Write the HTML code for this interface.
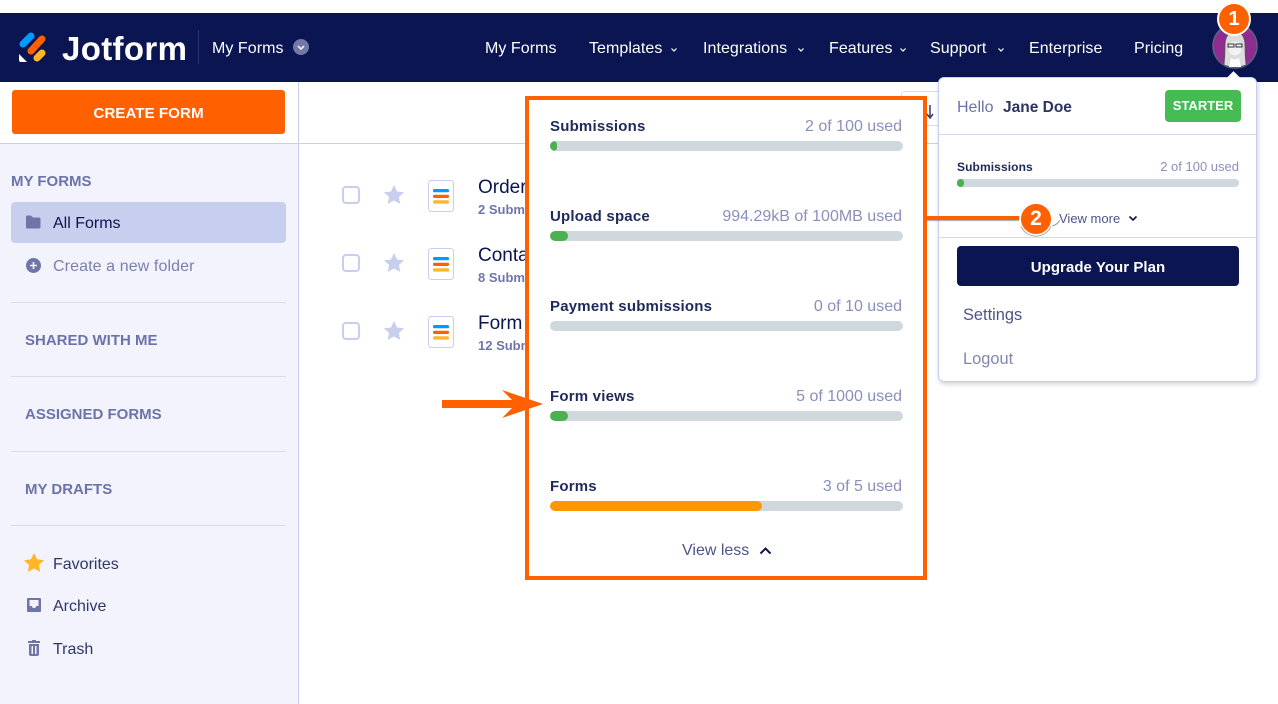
<!DOCTYPE html>
<html><head><meta charset="utf-8"><title>Jotform</title>
<style>
html,body{margin:0;padding:0;background:#fff}
#p{position:relative;width:1278px;height:704px;overflow:hidden;font-family:"Liberation Sans",sans-serif;background:#fff}
#p div,#p span.t{position:absolute}
.t{white-space:nowrap;line-height:20px}
.nav{color:#fff;font-size:16px;top:39px;letter-spacing:.05px}
.side{color:#6c73a8;font-size:15px;font-weight:bold}
.item{color:#2c3345;font-size:16px}
.hr{height:1px;background:#d9dcee}
.bar{height:10px;border-radius:5px;background:#cfd8dc;left:550px;width:353px;overflow:hidden}
.bar i{display:block;height:100%;border-radius:5px;background:#4caf50}
.lab{left:550px;font-size:15px;font-weight:bold;color:#1f2a5c;letter-spacing:.2px}
.use{right:376px;font-size:16px;color:#8a8fbb}
.fname{left:478px;font-size:19px;color:#0a1551}
.fsub{left:478px;font-size:13px;font-weight:bold;color:#6f76a7}
.cb{left:342px;width:14px;height:14px;border:2px solid #c8ceed;border-radius:4px;background:#fff}
</style></head><body><div id="p">
<div style="left:0;top:13px;width:1278px;height:69px;background:#0a1551"></div>
<div style="left:0;top:144px;width:298px;height:560px;background:#f3f3fe"></div>
<div style="left:298px;top:82px;width:1px;height:622px;background:#c8ceed"></div>
<div style="left:0;top:143px;width:938px;height:1px;background:#c8ceed"></div>

<svg style="position:absolute;left:18px;top:31px" width="30" height="33" viewBox="0 0 30 33">
<path d="M5 13 L13 5" stroke="#0099ff" stroke-width="7" stroke-linecap="round"/>
<path d="M13 20 L24 8" stroke="#ff6100" stroke-width="7" stroke-linecap="round"/>
<path d="M19 27 L24 22" stroke="#ffb629" stroke-width="7" stroke-linecap="round"/>
<path d="M1 23 L9 31 H3 Q1 31 1 29Z" fill="#fff"/>
</svg>
<span class="t" style="left:62px;top:32px;font-size:33px;line-height:34px;font-weight:bold;color:#fff;letter-spacing:.35px">Jotform</span>
<div style="left:198px;top:30px;width:1px;height:34px;background:#2b3570"></div>
<span class="t nav" style="left:212px">My Forms</span>
<div style="left:293px;top:39px;width:16px;height:16px;border-radius:50%;background:#7278a8"></div>
<svg style="position:absolute;left:293px;top:39px" width="16" height="16"><path d="M5 7l3 3 3-3" fill="none" stroke="#fff" stroke-width="1.500"/></svg>

<span class="t nav" style="left:485px">My Forms</span>
<span class="t nav" style="left:589px">Templates</span>
<span class="t nav" style="left:703px">Integrations</span>
<span class="t nav" style="left:829px">Features</span>
<span class="t nav" style="left:930px">Support</span>
<span class="t nav" style="left:1029px">Enterprise</span>
<span class="t nav" style="left:1134px">Pricing</span>
<svg style="position:absolute;left:0;top:0" width="1010" height="60" fill="none" stroke="#fff" stroke-width="1.200">
<path d="M671.500 48.500l2.500 2.500 2.500-2.500M798.500 48.500l2.500 2.500 2.500-2.500M900.500 48.500l2.500 2.500 2.500-2.500M998.500 48.500l2.500 2.500 2.500-2.500"/></svg>

<svg style="position:absolute;left:1212px;top:22px" width="46" height="48" viewBox="0 0 46 48">
<circle cx="23" cy="24" r="22" fill="#8e2c91" stroke="#5d6080" stroke-width="1.500"/>
<path d="M12 43 Q13 34 13 24 Q13 10 23 10 Q33 10 33 24 Q33 34 34 43 Q23 47 12 43Z" fill="#dcdcdc" stroke="#555" stroke-width=".8"/>
<path d="M17 22 Q23 17 29 22 V30 Q23 37 17 30Z" fill="#f2f2f2"/>
<rect x="16" y="22" width="6" height="3" fill="none" stroke="#333" stroke-width="1"/>
<rect x="24" y="22" width="6" height="3" fill="none" stroke="#333" stroke-width="1"/>
<path d="M19 36 Q23 39 27 36 L29 45 H17Z" fill="#fff"/>
</svg>
<div style="left:1217px;top:2px;width:30px;height:30px;border:2px solid #fff;border-radius:50%;background:#ff6100;color:#fff;font-size:20px;font-weight:bold;line-height:30px;text-align:center">1</div>

<div style="left:901px;top:91px;width:40px;height:35px;background:#fff;border:1px solid #d9dcee;border-radius:3px;box-sizing:border-box"></div>
<svg style="position:absolute;left:926px;top:104px" width="9" height="16"><path d="M4 1V14M1 10l3 4 3-4" fill="none" stroke="#343c6a" stroke-width="1.500"/></svg>

<div style="left:938px;top:77px;width:319px;height:305px;background:#fff;border:1px solid #c8ceed;border-radius:6px;box-sizing:border-box;box-shadow:1px 2px 5px rgba(10,21,81,.2)"></div>
<div style="left:1229px;top:73px;width:9px;height:9px;background:#fff;transform:rotate(45deg)"></div>
<span class="t" style="left:957px;top:98px;font-size:16px;color:#6c73a8">Hello</span>
<span class="t" style="left:1003px;top:98px;font-size:15.500px;font-weight:bold;color:#2c3360">Jane Doe</span>
<div style="left:1165px;top:90px;width:76px;height:32px;background:#45bb54;border-radius:4px;color:#fff;font-size:13px;font-weight:bold;line-height:32px;text-align:center">STARTER</div>
<div class="hr" style="left:939px;top:134px;width:317px;background:#d4d8ef"></div>
<span class="t" style="left:957px;top:157px;font-size:12px;letter-spacing:.1px;font-weight:bold;color:#1f2a5c">Submissions</span>
<span class="t" style="right:39px;top:157px;font-size:13px;color:#8a8fbb">2 of 100 used</span>
<div style="left:957px;top:179px;width:282px;height:8px;background:#cfd8dc;border-radius:4px"></div>
<div style="left:957px;top:179px;width:7px;height:8px;background:#4caf50;border-radius:4px"></div>
<span class="t" style="left:1059px;top:209px;font-size:13px;color:#4d5488">View more</span>
<svg style="position:absolute;left:1128px;top:215px" width="10" height="8"><path d="M1.500 1.500l3.500 3.500 3.500-3.500" fill="none" stroke="#0a1551" stroke-width="1.600"/></svg>
<div class="hr" style="left:939px;top:237px;width:317px;background:#d4d8ef"></div>
<div style="left:957px;top:246px;width:282px;height:40px;background:#0a1551;border-radius:4px;color:#fff;font-size:15px;font-weight:bold;line-height:43px;text-align:center;letter-spacing:.05px">Upgrade Your Plan</div>
<span class="t" style="left:963px;top:305px;font-size:16.400px;color:#4d5488">Settings</span>
<span class="t" style="left:963px;top:349px;font-size:16.400px;color:#8287b0">Logout</span>

<div style="left:12px;top:90px;width:273px;height:44px;background:#ff6100;border-radius:3px;color:#fff;font-size:15.200px;font-weight:bold;line-height:47px;text-align:center">CREATE FORM</div>

<span class="t side" style="left:11px;top:172px">MY FORMS</span>
<div style="left:11px;top:202px;width:275px;height:41px;background:#c8ceed;border-radius:4px"></div>
<svg style="position:absolute;left:25px;top:215px" width="16" height="14"><path d="M1 1.500Q1 .5 2 .5H6L8 2.500H14Q15.500 2.500 15.500 4V12Q15.500 13.500 14 13.500H2Q1 13.500 1 12Z" fill="#6f76a7"/></svg>
<span class="t item" style="left:53px;top:214px;color:#0a1551">All Forms</span>
<svg style="position:absolute;left:26px;top:258px" width="15" height="15"><circle cx="7.500" cy="7.500" r="7.500" fill="#6f76a7"/><path d="M7.500 4v7M4 7.500h7" stroke="#f3f3fe" stroke-width="1.600"/></svg>
<span class="t item" style="left:53px;top:257px;color:#7a80ad;letter-spacing:.1px">Create a new folder</span>
<div class="hr" style="left:11px;top:302px;width:275px"></div>
<span class="t side" style="left:25px;top:331px">SHARED WITH ME</span>
<div class="hr" style="left:11px;top:376px;width:275px"></div>
<span class="t side" style="left:25px;top:405px">ASSIGNED FORMS</span>
<div class="hr" style="left:11px;top:451px;width:275px"></div>
<span class="t side" style="left:25px;top:480px">MY DRAFTS</span>
<div class="hr" style="left:11px;top:525px;width:275px"></div>

<svg style="position:absolute;left:24px;top:553px" width="20" height="19" viewBox="0 0 20 19"><path d="M10 0l3 6.300 7 .9-5.100 4.800 1.300 6.900L10 15.500 3.800 18.900 5.100 12 0 7.200l7-.9z" fill="#ffb629"/></svg>
<span class="t item" style="left:53px;top:555px;color:#2f3768">Favorites</span>
<svg style="position:absolute;left:27px;top:598px" width="14" height="14"><path d="M1 0H13Q14 0 14 1V13Q14 14 13 14H1Q0 14 0 13V1Q0 0 1 0ZM2.500 2V8H4.500L6 10H8L9.500 8H11.500V2Z" fill="#6f76a7" fill-rule="evenodd"/></svg>
<span class="t item" style="left:53px;top:597px;color:#2f3768">Archive</span>
<svg style="position:absolute;left:28px;top:640px" width="12" height="16"><path d="M4 0H8V1H12V3H0V1H4ZM1 4H11V14Q11 16 9 16H3Q1 16 1 14ZM3.500 6V14H5V6ZM7 6V14H8.500V6Z" fill="#6f76a7" fill-rule="evenodd"/></svg>
<span class="t item" style="left:53px;top:640px;color:#2f3768">Trash</span>

<div class="cb" style="top:186px"></div><div class="cb" style="top:254px"></div><div class="cb" style="top:322px"></div>
<svg style="position:absolute;left:384px;top:185px" width="20" height="160" fill="#c8ceed">
<path d="M10 0l3 6.500 7 .8-5.100 4.700 1.400 7L10 15.500 3.700 19l1.400-7L0 7.300l7-.8z"/>
<path transform="translate(0 68)" d="M10 0l3 6.500 7 .8-5.100 4.700 1.400 7L10 15.500 3.700 19l1.400-7L0 7.300l7-.8z"/>
<path transform="translate(0 136)" d="M10 0l3 6.500 7 .8-5.100 4.700 1.400 7L10 15.500 3.700 19l1.400-7L0 7.300l7-.8z"/>
</svg>
<svg style="position:absolute;left:428px;top:180px" width="26" height="170">
<g><rect x=".5" y=".5" width="25" height="31" rx="3" fill="#fff" stroke="#c8ceed"/><rect x="5" y="9" width="16" height="3.300" rx="1.600" fill="#0099ff"/><rect x="5" y="14.700" width="16" height="3.300" rx="1.600" fill="#ff6100"/><rect x="5" y="20.300" width="16" height="3.300" rx="1.600" fill="#ffb629"/></g>
<g transform="translate(0 68)"><rect x=".5" y=".5" width="25" height="31" rx="3" fill="#fff" stroke="#c8ceed"/><rect x="5" y="9" width="16" height="3.300" rx="1.600" fill="#0099ff"/><rect x="5" y="14.700" width="16" height="3.300" rx="1.600" fill="#ff6100"/><rect x="5" y="20.300" width="16" height="3.300" rx="1.600" fill="#ffb629"/></g>
<g transform="translate(0 136)"><rect x=".5" y=".5" width="25" height="31" rx="3" fill="#fff" stroke="#c8ceed"/><rect x="5" y="9" width="16" height="3.300" rx="1.600" fill="#0099ff"/><rect x="5" y="14.700" width="16" height="3.300" rx="1.600" fill="#ff6100"/><rect x="5" y="20.300" width="16" height="3.300" rx="1.600" fill="#ffb629"/></g>
</svg>
<span class="t fname" style="top:178px">Order</span><span class="t fsub" style="top:200px">2 Subm</span>
<span class="t fname" style="top:246px">Conta</span><span class="t fsub" style="top:268px">8 Subm</span>
<span class="t fname" style="top:314px">Form</span><span class="t fsub" style="top:336px">12 Subm</span>

<div style="left:525px;top:96px;width:402px;height:484px;background:#fff;border:4px solid #ff6100;box-sizing:border-box"></div>

<span class="t lab" style="top:117px">Submissions</span><span class="t use" style="top:117px">2 of 100 used</span>
<div class="bar" style="top:141px"><i style="width:7px"></i></div>
<span class="t lab" style="top:207px">Upload space</span><span class="t use" style="top:207px">994.29kB of 100MB used</span>
<div class="bar" style="top:231px"><i style="width:18px"></i></div>
<span class="t lab" style="top:297px">Payment submissions</span><span class="t use" style="top:297px">0 of 10 used</span>
<div class="bar" style="top:321px"></div>
<span class="t lab" style="top:387px">Form views</span><span class="t use" style="top:387px">5 of 1000 used</span>
<div class="bar" style="top:411px"><i style="width:18px"></i></div>
<span class="t lab" style="top:477px">Forms</span><span class="t use" style="top:477px">3 of 5 used</span>
<div class="bar" style="top:501px"><i style="width:212px;background:#ff9800"></i></div>
<span class="t" style="left:682px;top:541px;font-size:16px;color:#4d5488">View less</span>
<svg style="position:absolute;left:759px;top:546px" width="13" height="10"><path d="M1.500 7.500l5-5 5 5" fill="none" stroke="#0a1551" stroke-width="2"/></svg>

<svg style="position:absolute;left:440px;top:388px" width="105" height="32"><path d="M2 12H72L62 2 103 16 62 30 72 20H2Z" fill="#ff6100"/></svg>
<div style="left:927px;top:216px;width:95px;height:4px;background:#ff6100;box-shadow:0 1px 1px rgba(0,0,0,.35)"></div>
<svg style="position:absolute;left:1018px;top:200px" width="46" height="38"><path d="M34 26Q39 25 42 20" fill="none" stroke="#888" stroke-width=".8"/><circle cx="18" cy="19" r="16" fill="#ff6100" stroke="#fff" stroke-width="2"/><path d="M3 25A16.500 16.500 0 0 0 33 25" fill="none" stroke="#aaa" stroke-width="1" transform="translate(0 1.500)"/></svg>
<span class="t" style="left:1018px;top:209px;width:36px;text-align:center;color:#fff;font-size:21px;font-weight:bold">2</span>
</div></body></html>
